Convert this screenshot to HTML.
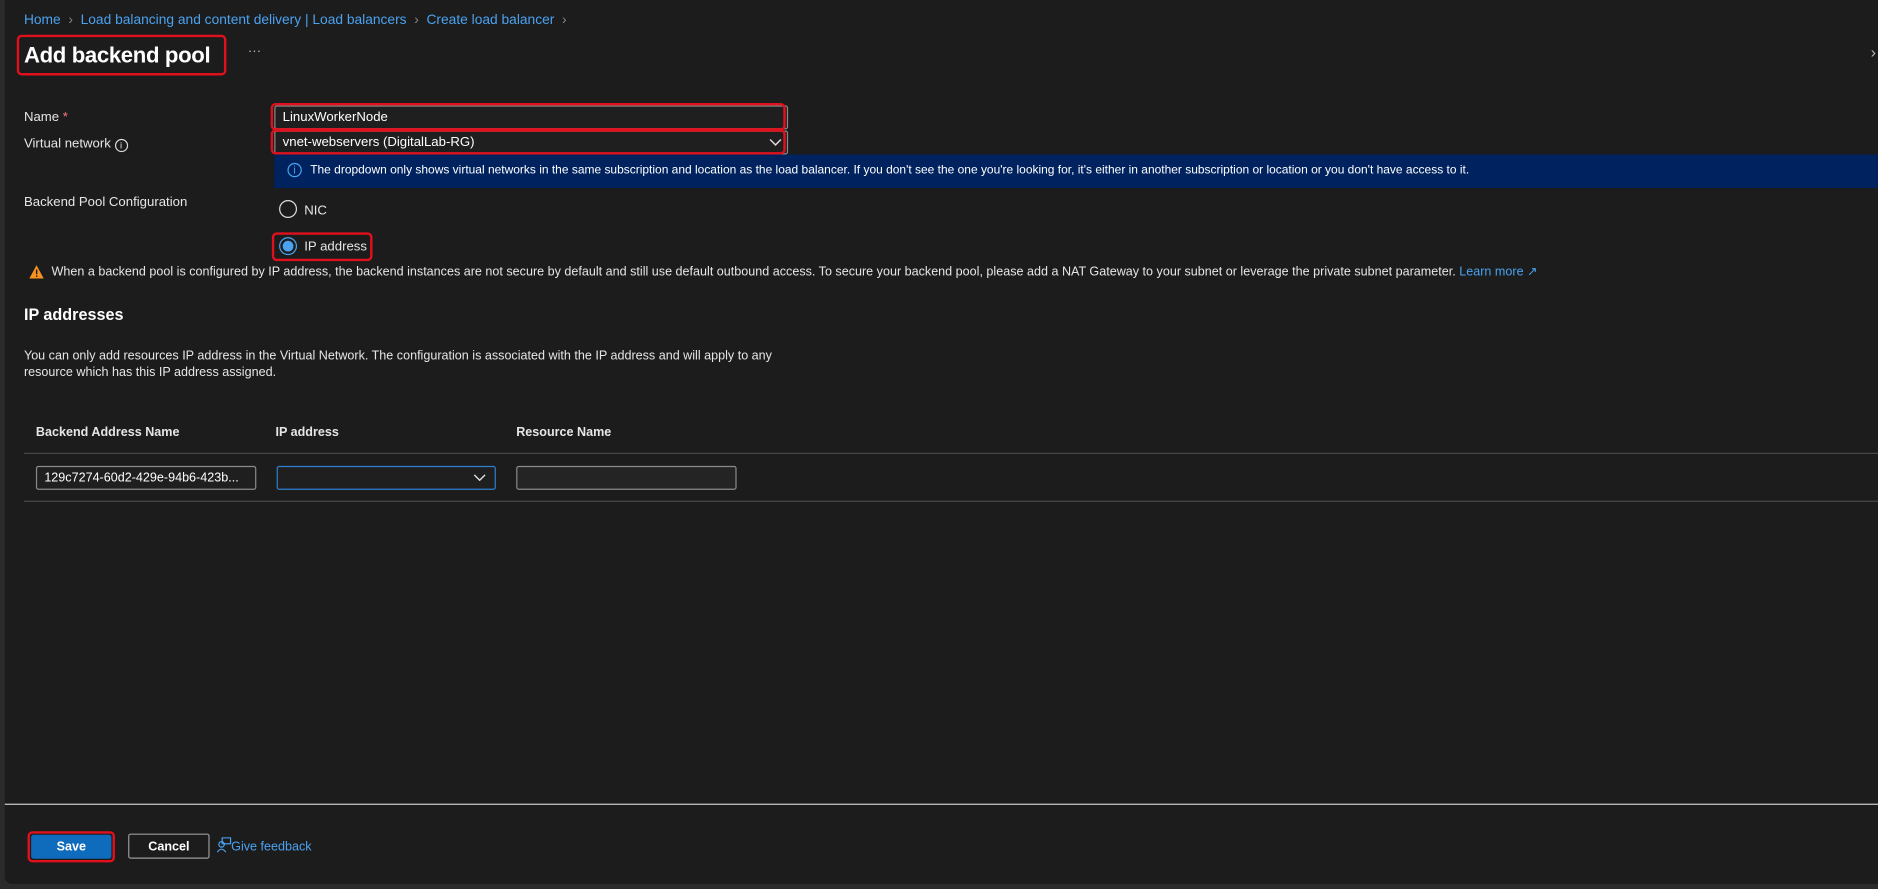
<!DOCTYPE html>
<html><head><meta charset="utf-8"><style>
html,body{margin:0;padding:0;background:#2b2b2b;width:1878px;height:889px;overflow:hidden;font-family:"Liberation Sans",sans-serif;}
#w{position:absolute;left:0;top:0;width:1568px;height:742px;transform:scale(1.19770);transform-origin:0 0;}
.panel{position:absolute;left:4px;top:0;width:1564px;height:738px;background:#1c1c1c;border-bottom-left-radius:6px;}
.a{position:absolute;white-space:nowrap;color:#e6e6e6;font-size:11px;line-height:14px;}
.blue{color:#4aa2f0;}
.box{position:absolute;box-sizing:border-box;}
.red{position:absolute;box-sizing:border-box;border:2px solid #e0101c;border-radius:4px;}
.inp{position:absolute;box-sizing:border-box;border:1px solid #8a8a8a;background:#1f1f1f;border-radius:2px;}
.line{position:absolute;height:1px;}
</style></head><body><div id="w">
<div class="panel"></div>
<div class="a blue" style="left:20px;top:10px;font-size:11.5px;">Home <span style="color:#888">&nbsp;›&nbsp;</span> Load balancing and content delivery | Load balancers <span style="color:#888">&nbsp;›&nbsp;</span> Create load balancer <span style="color:#888">&nbsp;›</span></div>
<div class="a" style="left:20px;top:34px;font-size:18.5px;line-height:24px;font-weight:bold;color:#fff;letter-spacing:-0.3px;">Add backend pool</div>
<div class="red" style="left:14px;top:29px;width:175px;height:34px;"></div>
<div class="a" style="left:207px;top:36px;color:#bbb;">···</div>
<div class="a" style="left:1562px;top:37px;color:#bbb;font-size:13px;">›</div>

<div class="a" style="left:20px;top:91px;">Name <span style="color:#f87c86">*</span></div>
<div class="a" style="left:20px;top:113px;">Virtual network <span style="display:inline-block;width:9px;height:9px;border:1px solid #ddd;border-radius:50%;font-size:8px;line-height:9px;text-align:center;vertical-align:-1px">i</span></div>
<div class="inp" style="left:229px;top:88px;width:429px;height:20px;"></div>
<div class="a" style="left:236px;top:91px;color:#fff;">LinuxWorkerNode</div>
<div class="inp" style="left:229px;top:109px;width:429px;height:20px;"></div>
<div class="a" style="left:236px;top:112px;color:#fff;">vnet-webservers (DigitalLab-RG)</div>
<svg style="position:absolute;left:642px;top:115px" width="11" height="8"><path d="M1 1.5 L5.5 6 L10 1.5" stroke="#ddd" fill="none" stroke-width="1.2"/></svg>
<div class="red" style="left:226px;top:86px;width:430px;height:23px;"></div>
<div class="red" style="left:226px;top:108px;width:430px;height:21px;"></div>
<div class="box" style="left:229px;top:129px;width:1339px;height:28px;background:#002360;"></div>
<div class="box" style="left:240px;top:136px;width:12px;height:12px;border:1px solid #4aa2f0;border-radius:50%;color:#4aa2f0;font-size:9px;line-height:11px;text-align:center;">i</div>
<div class="a" style="left:259px;top:136px;color:#fff;font-size:10px;">The dropdown only shows virtual networks in the same subscription and location as the load balancer. If you don't see the one you're looking for, it's either in another subscription or location or you don't have access to it.</div>

<div class="a" style="left:20px;top:162px;">Backend Pool Configuration</div>
<div class="box" style="left:233px;top:167px;width:15px;height:15px;border:1.5px solid #ddd;border-radius:50%;"></div>
<div class="a" style="left:254px;top:169px;">NIC</div>
<div class="box" style="left:233px;top:198px;width:15px;height:15px;border:1.5px solid #4aa2f0;border-radius:50%;"></div>
<div class="box" style="left:236px;top:201px;width:9px;height:9px;background:#4aa2f0;border-radius:50%;"></div>
<div class="a" style="left:254px;top:199px;">IP address</div>
<div class="red" style="left:227px;top:194px;width:84px;height:24px;"></div>

<svg style="position:absolute;left:24px;top:221px" width="13" height="12"><path d="M6.5 0.5 L12.5 11.5 L0.5 11.5 Z" fill="#f7931e"/><rect x="6" y="4" width="1.2" height="4" fill="#1c1c1c"/><rect x="6" y="9" width="1.2" height="1.2" fill="#1c1c1c"/></svg>
<div class="a" style="left:43px;top:220px;font-size:10.5px;">When a backend pool is configured by IP address, the backend instances are not secure by default and still use default outbound access. To secure your backend pool, please add a NAT Gateway to your subnet or leverage the private subnet parameter. <span class="blue">Learn more &#x2197;</span></div>

<div class="a" style="left:20px;top:254px;font-size:13.5px;line-height:17px;font-weight:bold;color:#fff;">IP addresses</div>
<div class="a" style="left:20px;top:290px;font-size:10.5px;">You can only add resources IP address in the Virtual Network. The configuration is associated with the IP address and will apply to any</div>
<div class="a" style="left:20px;top:304px;font-size:10.5px;">resource which has this IP address assigned.</div>

<div class="a" style="left:30px;top:354px;font-weight:bold;font-size:10.5px;">Backend Address Name</div>
<div class="a" style="left:230px;top:354px;font-weight:bold;font-size:10.5px;">IP address</div>
<div class="a" style="left:431px;top:354px;font-weight:bold;font-size:10.5px;">Resource Name</div>
<div class="line" style="left:20px;top:378px;width:1548px;background:#4a4a4a;"></div>
<div class="inp" style="left:30px;top:389px;width:184px;height:20px;"></div>
<div class="a" style="left:37px;top:392px;color:#fff;font-size:10.5px;">129c7274-60d2-429e-94b6-423b...</div>
<div class="inp" style="left:231px;top:389px;width:183px;height:20px;border:1.5px solid #2f7fd0;"></div>
<svg style="position:absolute;left:395px;top:395px" width="11" height="8"><path d="M1 1.5 L5.5 6 L10 1.5" stroke="#ddd" fill="none" stroke-width="1.2"/></svg>
<div class="inp" style="left:431px;top:389px;width:184px;height:20px;background:#242424;"></div>
<div class="line" style="left:20px;top:418px;width:1548px;background:#4a4a4a;"></div>

<div class="line" style="left:4px;top:671px;width:1564px;background:#cfcfcf;"></div>
<div class="box" style="left:26px;top:697px;width:67px;height:20px;background:#0f6cbd;border-radius:2px;color:#fff;font-weight:bold;font-size:10.5px;line-height:20px;text-align:center;">Save</div>
<div class="red" style="left:23px;top:694px;width:73px;height:26px;"></div>
<div class="box" style="left:107px;top:696px;width:68px;height:21px;border:1px solid #9a9a9a;border-radius:2px;color:#fff;font-weight:bold;font-size:10.5px;line-height:20px;text-align:center;">Cancel</div>
<svg style="position:absolute;left:181px;top:699px" width="13" height="13"><rect x="4.5" y="0.5" width="7" height="5" fill="none" stroke="#4aa2f0"/><circle cx="4" cy="6" r="2.3" fill="none" stroke="#4aa2f0"/><path d="M0.5 12.5 Q4 7.5 7.5 12.5" fill="none" stroke="#4aa2f0"/></svg>
<div class="a blue" style="left:193px;top:700px;font-size:10.5px;">Give feedback</div>
</div></body></html>
